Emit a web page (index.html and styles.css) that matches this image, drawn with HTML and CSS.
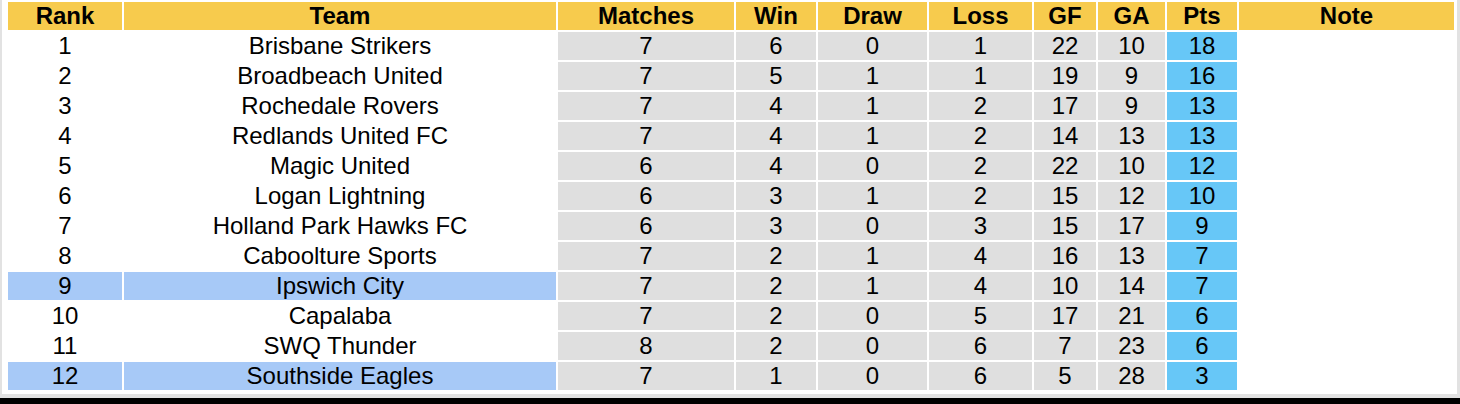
FILE: index.html
```html
<!DOCTYPE html>
<html>
<head>
<meta charset="utf-8">
<link rel="stylesheet" href="styles.css">
</head>
<body>
<div class="frame">
<table class="standings">
<colgroup>
<col class="c-rank"><col class="c-team"><col class="c-m"><col class="c-w"><col class="c-d"><col class="c-l"><col class="c-gf"><col class="c-ga"><col class="c-pts"><col class="c-note">
</colgroup>
<thead>
<tr><th>Rank</th><th>Team</th><th>Matches</th><th>Win</th><th>Draw</th><th>Loss</th><th>GF</th><th>GA</th><th>Pts</th><th>Note</th></tr>
</thead>
<tbody>
<tr><td>1</td><td>Brisbane Strikers</td><td class="s">7</td><td class="s">6</td><td class="s">0</td><td class="s">1</td><td class="s">22</td><td class="s">10</td><td class="p">18</td><td></td></tr>
<tr><td>2</td><td>Broadbeach United</td><td class="s">7</td><td class="s">5</td><td class="s">1</td><td class="s">1</td><td class="s">19</td><td class="s">9</td><td class="p">16</td><td></td></tr>
<tr><td>3</td><td>Rochedale Rovers</td><td class="s">7</td><td class="s">4</td><td class="s">1</td><td class="s">2</td><td class="s">17</td><td class="s">9</td><td class="p">13</td><td></td></tr>
<tr><td>4</td><td>Redlands United FC</td><td class="s">7</td><td class="s">4</td><td class="s">1</td><td class="s">2</td><td class="s">14</td><td class="s">13</td><td class="p">13</td><td></td></tr>
<tr><td>5</td><td>Magic United</td><td class="s">6</td><td class="s">4</td><td class="s">0</td><td class="s">2</td><td class="s">22</td><td class="s">10</td><td class="p">12</td><td></td></tr>
<tr><td>6</td><td>Logan Lightning</td><td class="s">6</td><td class="s">3</td><td class="s">1</td><td class="s">2</td><td class="s">15</td><td class="s">12</td><td class="p">10</td><td></td></tr>
<tr><td>7</td><td>Holland Park Hawks FC</td><td class="s">6</td><td class="s">3</td><td class="s">0</td><td class="s">3</td><td class="s">15</td><td class="s">17</td><td class="p">9</td><td></td></tr>
<tr><td>8</td><td>Caboolture Sports</td><td class="s">7</td><td class="s">2</td><td class="s">1</td><td class="s">4</td><td class="s">16</td><td class="s">13</td><td class="p">7</td><td></td></tr>
<tr class="hl"><td>9</td><td>Ipswich City</td><td class="s">7</td><td class="s">2</td><td class="s">1</td><td class="s">4</td><td class="s">10</td><td class="s">14</td><td class="p">7</td><td class="note"></td></tr>
<tr><td>10</td><td>Capalaba</td><td class="s">7</td><td class="s">2</td><td class="s">0</td><td class="s">5</td><td class="s">17</td><td class="s">21</td><td class="p">6</td><td></td></tr>
<tr><td>11</td><td>SWQ Thunder</td><td class="s">8</td><td class="s">2</td><td class="s">0</td><td class="s">6</td><td class="s">7</td><td class="s">23</td><td class="p">6</td><td></td></tr>
<tr class="hl"><td>12</td><td>Southside Eagles</td><td class="s">7</td><td class="s">1</td><td class="s">0</td><td class="s">6</td><td class="s">5</td><td class="s">28</td><td class="p">3</td><td class="note"></td></tr>
</tbody>
</table>
</div>
</body>
</html>
```
FILE: styles.css
```css
html {
  background: #000;
}
body {
  margin: 0;
  font-family: "Liberation Sans", Arial, sans-serif;
  color: #000;
}
.frame {
  box-sizing: border-box;
  width: 1460px;
  height: 398px;
  background: #fff;
  border-left: 2px solid #e2e2e2;
  border-right: 3px solid #e2e2e2;
  border-bottom: 4px solid #e2e2e2;
  padding: 0 1px 2px 4px;
}
.standings {
  table-layout: fixed;
  width: 1450px;
  border-collapse: separate;
  border-spacing: 2px;
  font-size: 24px;
}
.c-rank { width: 114px; }
.c-team { width: 432px; }
.c-m { width: 176px; }
.c-w { width: 80px; }
.c-d { width: 109px; }
.c-l { width: 103px; }
.c-gf { width: 62px; }
.c-ga { width: 67px; }
.c-pts { width: 70px; }
.c-note { width: 215px; }
.standings th,
.standings td {
  height: 28px;
  padding: 0;
  text-align: center;
  vertical-align: middle;
  line-height: 28px;
  white-space: nowrap;
  overflow: hidden;
}
.standings th {
  background: #f7cb4d;
  font-weight: bold;
}
.standings td.s {
  background: #dfdfdf;
}
.standings td.p {
  background: #67c7f7;
}
.standings tr.hl td {
  background: #a7c9f7;
}
.standings tr.hl td.s {
  background: #dfdfdf;
}
.standings tr.hl td.p {
  background: #67c7f7;
}
.standings tr.hl td.note {
  background: #fff;
}
```
